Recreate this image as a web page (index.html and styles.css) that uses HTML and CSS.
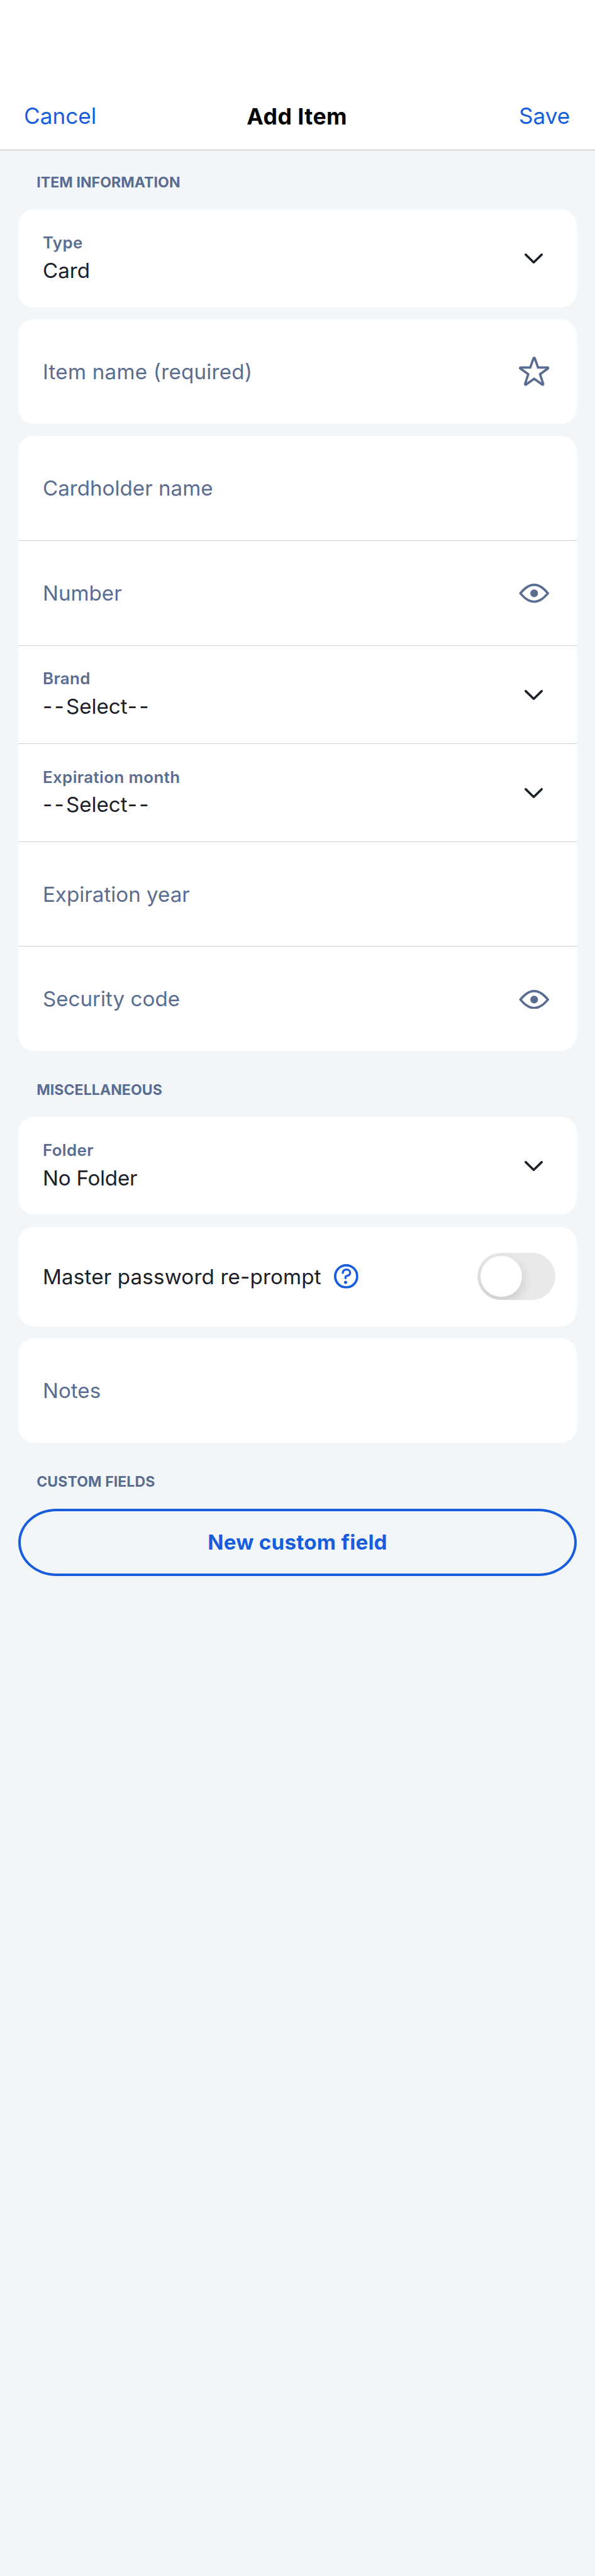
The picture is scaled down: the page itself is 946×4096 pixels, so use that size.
FILE: index.html
```html
<!DOCTYPE html>
<html lang="en">
<head>
<meta charset="utf-8">
<title>Add Item</title>
<link rel="stylesheet" href="styles.css">
</head>
<body>
<svg class="defs" aria-hidden="true">
  <symbol id="chevron" viewBox="0 0 36 20.4"><path d="M2.3 2.3 18 17.6 33.7 2.3" fill="none" stroke="currentColor" stroke-width="4.4" stroke-linecap="round" stroke-linejoin="round"/></symbol>
  <symbol id="star" viewBox="0 0 60 58"><path d="M31.3 3.4 37.7 21.4H56.6Q58.8 22 57 23.6L41.6 34.7 47.8 53.6Q47.9 56 45.8 54.8L30 43.5 14.2 54.8Q12.1 56 12.2 53.6L18.4 34.7 3 23.6Q1.2 22 3.4 21.4H22.3L28.7 3.4Q30 1.4 31.3 3.4Z" fill="none" stroke="currentColor" stroke-width="4.6"/></symbol>
  <symbol id="eye" viewBox="0 0 60 38"><path d="M2.9 19C9.5 11.5 18 2.4 30 2.4S50.5 11.5 57.1 19C50.5 26.5 42 35.6 30 35.6S9.5 26.5 2.9 19Z" fill="none" stroke="currentColor" stroke-width="4.6" stroke-linejoin="round"/><circle cx="30" cy="19" r="7.6" fill="currentColor"/></symbol>
  <symbol id="help" viewBox="0 0 48 48"><circle cx="24" cy="24" r="21.7" fill="none" stroke="currentColor" stroke-width="4.6"/><path d="M17.3 17.4C17.8 13 20.8 10.8 24.8 10.8 29 10.8 31.8 13.5 31.8 17 31.8 20.6 29.5 22.1 26.5 22.8 23.6 23.5 22.7 24 22.7 25.6V27.8" fill="none" stroke="currentColor" stroke-width="4" stroke-linecap="round"/><circle cx="22.8" cy="36" r="3.1" fill="currentColor"/></symbol>
</svg>

<header class="navbar">
  <a class="nav-action cancel">Cancel</a>
  <h1 class="nav-title">Add Item</h1>
  <a class="nav-action save">Save</a>
</header>

<main class="content">
  <h2 class="section-title first">ITEM INFORMATION</h2>
  <div class="stack">
    <div class="card">
      <div class="row select">
        <div class="field"><span class="label">Type</span><span class="value">Card</span></div>
        <svg class="chevron"><use href="#chevron"/></svg>
      </div>
    </div>
    <div class="card">
      <div class="row"><span class="placeholder item-name">Item name (required)</span><svg class="star"><use href="#star"/></svg></div>
    </div>
    <div class="card">
      <div class="row"><span class="placeholder">Cardholder name</span></div>
      <div class="row"><span class="placeholder">Number</span><svg class="eye"><use href="#eye"/></svg></div>
      <div class="row select">
        <div class="field"><span class="label">Brand</span><span class="value unset"><span class="dashes">--</span>Select<span class="dashes">--</span></span></div>
        <svg class="chevron"><use href="#chevron"/></svg>
      </div>
      <div class="row select">
        <div class="field"><span class="label">Expiration month</span><span class="value unset"><span class="dashes">--</span>Select<span class="dashes">--</span></span></div>
        <svg class="chevron"><use href="#chevron"/></svg>
      </div>
      <div class="row"><span class="placeholder">Expiration year</span></div>
      <div class="row"><span class="placeholder">Security code</span><svg class="eye"><use href="#eye"/></svg></div>
    </div>
  </div>

  <h2 class="section-title">MISCELLANEOUS</h2>
  <div class="stack">
    <div class="card">
      <div class="row select">
        <div class="field"><span class="label">Folder</span><span class="value folder">No Folder</span></div>
        <svg class="chevron"><use href="#chevron"/></svg>
      </div>
    </div>
    <div class="card">
      <div class="row switch-row">
        <span class="switch-label">Master password re-prompt</span>
        <svg class="help"><use href="#help"/></svg>
        <span class="switch"><span class="knob"></span></span>
      </div>
    </div>
    <div class="card">
      <div class="row"><span class="placeholder">Notes</span></div>
    </div>
  </div>

  <h2 class="section-title">CUSTOM FIELDS</h2>
  <button class="button">New custom field</button>
</main>
</body>
</html>
```
FILE: styles.css
```css
/* 1rem is ten design pixels */
html {
  font-size: 8.0885px;
}

* {
  box-sizing: border-box;
}

body {
  margin: 0;
  min-height: 4096px;
  background: #f3f6f9;
  color: #1b2029;
  font-family: Inter, "Liberation Sans", sans-serif;
  font-size: 4.1rem;
}

svg {
  display: block;
  flex: none;
}

.defs {
  display: none;
}

.navbar {
  display: grid;
  grid-template-columns: 1fr auto 1fr;
  align-items: center;
  height: 29.5rem;
  padding: 16.3rem 4.9rem 0 4.7rem;
  background: #fff;
  border-bottom: 1px solid #b6b6b8;
}

.nav-action {
  color: #175ddc;
  font-size: 4.35rem;
  line-height: 6rem;
}

.save {
  justify-self: end;
}

.nav-title {
  margin: 0;
  padding-top: 0.4rem;
  color: #000;
  font-size: 4.4rem;
  font-weight: 700;
  letter-spacing: 0.06rem;
  line-height: 6rem;
}

.content {
  padding: 0 3.6rem;
}

.section-title {
  margin: 0;
  padding: 5.75rem 3.6rem 3.25rem;
  color: #5a6d91;
  font-size: 2.85rem;
  font-weight: 700;
  letter-spacing: 0.01rem;
  line-height: 4rem;
}

.section-title.first {
  padding: 4.35rem 3.6rem 3.35rem;
}

.stack {
  display: flex;
  flex-direction: column;
  gap: 2.4rem;
}

.card {
  overflow: hidden;
  background: #fff;
  border-radius: 3.1rem;
}

.row {
  display: flex;
  align-items: center;
  height: 20.5rem;
  padding: 0 5.4rem 0 4.8rem;
}

.row + .row {
  border-top: 1px solid #d1d1d3;
  height: 20.6rem;
}

.row.select {
  height: 19.2rem;
}

.row + .row.select {
  height: 19.3rem;
}

.row.switch-row {
  height: 19.5rem;
  padding-right: 4.2rem;
}

.field {
  display: flex;
  flex: 1;
  flex-direction: column;
}

.label {
  color: #5a6d91;
  font-size: 3.2rem;
  font-weight: 600;
  letter-spacing: 0.05rem;
  line-height: 4.8rem;
}

.value {
  line-height: 6rem;
}

.value.folder {
  letter-spacing: -0.03rem;
}

.dashes {
  letter-spacing: 0.4rem;
}

.placeholder {
  flex: 1;
  color: #5a6d91;
}

.item-name {
  letter-spacing: 0.03rem;
}

.switch-label {
  letter-spacing: 0.02rem;
}

.chevron {
  width: 3.6rem;
  height: 2.04rem;
  margin: 0.2rem 1.2rem 0 0;
}

.star {
  width: 6rem;
  height: 5.8rem;
  color: #5a6d91;
}

.eye {
  width: 6rem;
  height: 3.8rem;
  margin-top: 0.2rem;
  color: #5a6d91;
}

.help {
  width: 4.8rem;
  height: 4.8rem;
  margin-left: 2.5rem;
  color: #175ddc;
}

.switch {
  width: 15.3rem;
  height: 9.3rem;
  margin-left: auto;
  padding: 0.6rem;
  overflow: hidden;
  background: #e9e9ea;
  border-radius: 4.65rem;
}

.knob {
  display: block;
  width: 8.1rem;
  height: 8.1rem;
  background: #fff;
  border-radius: 50%;
  box-shadow: 0 0.9rem 2.4rem rgba(0, 0, 0, 0.15);
}

.button {
  display: block;
  width: 100%;
  height: 13.2rem;
  padding: 0;
  background: none;
  border: 4px solid #175ddc;
  border-radius: 7.5rem / 6.6rem;
  color: #175ddc;
  font: 700 4.1rem Inter, "Liberation Sans", sans-serif;
  letter-spacing: 0.03rem;
}
```
